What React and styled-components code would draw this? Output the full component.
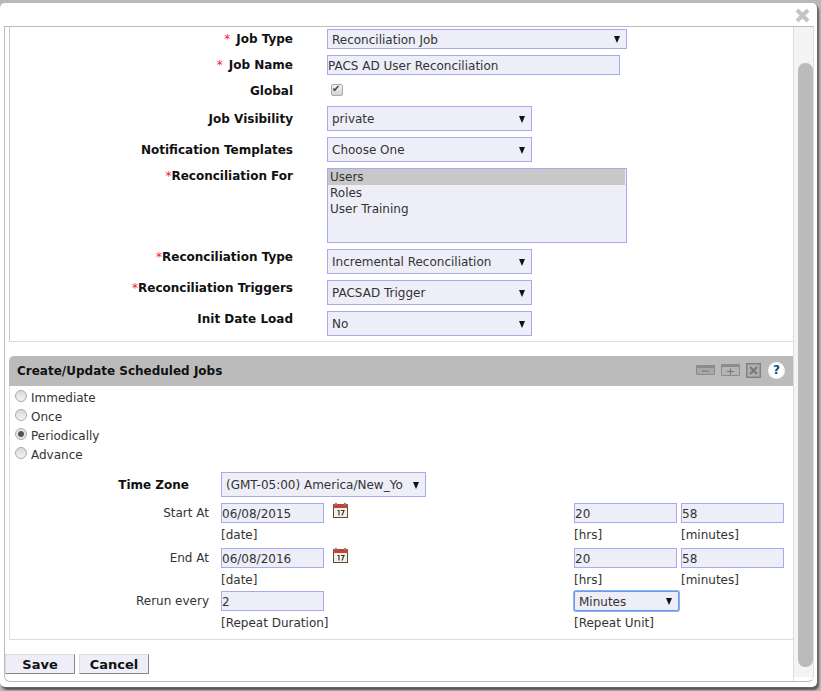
import React from "react";
import styled, { createGlobalStyle } from "styled-components";

const GlobalStyle = createGlobalStyle`
  html, body {
    margin: 0;
    padding: 0;
    height: 691px;
    overflow: hidden;
    background: #b9b9b9;
  }
  body, input, select, button {
    font-family: "DejaVu Sans", Verdana, sans-serif;
    font-size: 12px;
  }
`;

function Dropdown({ width, height, focused, children }) {
  return (
    <SelectWrap $width={width}>
      <SelectBox $height={height} $focused={focused} defaultValue={children}>
        <option>{children}</option>
      </SelectBox>
    </SelectWrap>
  );
}

function FormRow({ label, required, top, height, children }) {
  return (
    <Row $height={height}>
      <RowLabel $top={top}>
        {required && <Star $spaced={required === "spaced"}>*</Star>}
        {label}
      </RowLabel>
      {children}
    </Row>
  );
}

function Radio({ label, checked }) {
  return (
    <RadioRow>
      <RadioDot type="radio" name="schedule" defaultChecked={checked} />
      {label}
    </RadioRow>
  );
}

function CalendarIcon() {
  return (
    <CalendarWrap>
      <svg width="17" height="17" viewBox="0 0 17 17">
        <rect x="1.5" y="2.5" width="14" height="13" fill="#f4f0e4" stroke="#5a4a3a" />
        <rect x="1" y="2" width="15" height="4" fill="#c0443a" />
        <circle cx="4" cy="2" r="1.2" fill="#888" />
        <circle cx="13" cy="2" r="1.2" fill="#888" />
        <path d="M5.5 8.5h1.5v5M9 8.5h3l-2 5" fill="none" stroke="#333" strokeWidth="1.1" />
      </svg>
    </CalendarWrap>
  );
}

function PanelIcons() {
  return (
    <IconRow>
      <svg width="19" height="10" viewBox="0 0 19 10">
        <rect width="19" height="10" rx="1" fill="#8c8c8c" />
        <rect x="1" y="3" width="17" height="6" fill="#a8a8a8" />
        <path d="M6 6h7" stroke="#777" />
      </svg>
      <svg width="19" height="12" viewBox="0 0 19 12">
        <rect width="19" height="12" rx="1" fill="#8c8c8c" />
        <rect x="1" y="3" width="17" height="8" fill="#b4b4b4" />
        <path d="M6 7.5h7M9.5 4.5v6" stroke="#777" />
      </svg>
      <svg width="15" height="15" viewBox="0 0 15 15">
        <rect x="0.75" y="0.75" width="13.5" height="13.5" fill="#b0b0b0" stroke="#808080" strokeWidth="1.5" />
        <path d="M4 4l7 7M11 4l-7 7" stroke="#7a7a7a" strokeWidth="2.4" />
      </svg>
      <HelpDot>?</HelpDot>
    </IconRow>
  );
}

export default function App() {
  return (
    <>
      <GlobalStyle />
      <Dialog>
        <CloseBtn aria-label="Close">
          <svg width="15" height="15" viewBox="0 0 15 15">
            <path d="M2 2l11 11M13 2l-11 11" stroke="#c4c4c4" strokeWidth="4" />
          </svg>
        </CloseBtn>
        <ScrollFrame>
          <Content>
            <JobPanel>
              <FormRow label="Job Type" required="spaced" height={20}>
                <Dropdown width={300} height={20}>Reconciliation Job</Dropdown>
              </FormRow>
              <FormRow label="Job Name" required="spaced" height={20}>
                <TextInput $width={293} defaultValue="PACS AD User Reconciliation" />
              </FormRow>
              <FormRow label="Global" height={19}>
                <CheckBox type="checkbox" defaultChecked />
              </FormRow>
              <FormRow label="Job Visibility" height={25}>
                <Dropdown width={205} height={25}>private</Dropdown>
              </FormRow>
              <FormRow label="Notification Templates" height={25}>
                <Dropdown width={205} height={25}>Choose One</Dropdown>
              </FormRow>
              <FormRow label="Reconciliation For" required="tight" height={75} top>
                <ListBox>
                  <ListItem $selected>Users</ListItem>
                  <ListItem>Roles</ListItem>
                  <ListItem>User Training</ListItem>
                </ListBox>
              </FormRow>
              <FormRow label="Reconciliation Type" required="tight" height={25} top>
                <Dropdown width={205} height={25}>Incremental Reconciliation</Dropdown>
              </FormRow>
              <FormRow label="Reconciliation Triggers" required="tight" height={25} top>
                <Dropdown width={205} height={25}>PACSAD Trigger</Dropdown>
              </FormRow>
              <FormRow label="Init Date Load" height={25} top>
                <Dropdown width={205} height={25}>No</Dropdown>
              </FormRow>
            </JobPanel>

            <SchedulePanel>
              <PanelHeader>
                <PanelTitle>Create/Update Scheduled Jobs</PanelTitle>
                <PanelIcons />
              </PanelHeader>
              <PanelBody>
                <Radio label="Immediate" />
                <Radio label="Once" />
                <Radio label="Periodically" checked />
                <Radio label="Advance" />

                <TimeZoneRow>
                  <TimeZoneLabel>Time Zone</TimeZoneLabel>
                  <Dropdown width={205} height={25}>(GMT-05:00) America/New_York</Dropdown>
                </TimeZoneRow>

                <FieldGrid>
                  <FieldLabel>Start At</FieldLabel>
                  <Field>
                    <DateLine>
                      <TextInput $width={103} defaultValue="06/08/2015" />
                      <CalendarIcon />
                    </DateLine>
                    <Hint>[date]</Hint>
                  </Field>
                  <Field>
                    <TextInput $width={103} defaultValue="20" />
                    <Hint>[hrs]</Hint>
                  </Field>
                  <Field>
                    <TextInput $width={103} defaultValue="58" />
                    <Hint>[minutes]</Hint>
                  </Field>

                  <FieldLabel>End At</FieldLabel>
                  <Field>
                    <DateLine>
                      <TextInput $width={103} defaultValue="06/08/2016" />
                      <CalendarIcon />
                    </DateLine>
                    <Hint>[date]</Hint>
                  </Field>
                  <Field>
                    <TextInput $width={103} defaultValue="20" />
                    <Hint>[hrs]</Hint>
                  </Field>
                  <Field>
                    <TextInput $width={103} defaultValue="58" />
                    <Hint>[minutes]</Hint>
                  </Field>

                  <FieldLabel>Rerun every</FieldLabel>
                  <Field>
                    <TextInput $width={103} defaultValue="2" />
                    <Hint>[Repeat Duration]</Hint>
                  </Field>
                  <Field>
                    <Dropdown width={105} height={20} focused>Minutes</Dropdown>
                    <Hint>[Repeat Unit]</Hint>
                  </Field>
                </FieldGrid>
              </PanelBody>
            </SchedulePanel>

            <ButtonRow>
              <ActionButton>Save</ActionButton>
              <ActionButton>Cancel</ActionButton>
            </ButtonRow>
          </Content>
          <ScrollTrack>
            <ScrollThumb />
          </ScrollTrack>
        </ScrollFrame>
      </Dialog>
    </>
  );
}

const Dialog = styled.div`
  position: relative;
  box-sizing: border-box;
  width: 817px;
  height: 684px;
  margin-top: 3px;
  padding: 23px 3px 5px 4px;
  background: #fff;
  border-radius: 5px;
  box-shadow: 1px 1px 0 #666, 2px 3px 2px #555;
`;

const CloseBtn = styled.button`
  position: absolute;
  top: 5px;
  right: 7px;
  width: 15px;
  height: 15px;
  padding: 0;
  border: none;
  background: none;
`;

const ScrollFrame = styled.div`
  display: flex;
  height: 656px;
  box-sizing: border-box;
  border-top: 1px solid #bbb;
  border-left: 1px solid #bbb;
  border-bottom: 1px solid #bbb;
  border-right: 1px solid #ddd;
  border-radius: 0 0 6px 6px;
  overflow: hidden;
`;

const Content = styled.div`
  box-sizing: border-box;
  width: 789px;
  flex: none;
  border-right: 1px solid #ddd;
  overflow: hidden;
`;

const ScrollTrack = styled.div`
  flex: 1;
  box-sizing: border-box;
  height: 650px;
  padding: 36px 0 0 4px;
  background: #f4f4f4;
`;

const ScrollThumb = styled.div`
  width: 15px;
  height: 604px;
  border-radius: 7px;
  background: #bbb;
`;

const JobPanel = styled.div`
  box-sizing: border-box;
  display: flex;
  flex-direction: column;
  gap: 6px;
  height: 315px;
  margin-left: 4px;
  padding-top: 2px;
  border-left: 1px solid #ccc;
  border-bottom: 1px solid #ddd;
`;

const Row = styled.div`
  display: grid;
  grid-template-columns: 283px 1fr;
  column-gap: 34px;
  height: ${(p) => p.$height}px;
`;

const RowLabel = styled.div`
  font-weight: bold;
  color: #111;
  text-align: right;
  line-height: 14px;
  align-self: ${(p) => (p.$top ? "start" : "center")};
  margin-top: ${(p) => (p.$top ? "1px" : "0")};
`;

const Star = styled.span`
  color: #f02040;
  font-weight: normal;
  margin-right: ${(p) => (p.$spaced ? "6px" : "0")};
`;

const SelectWrap = styled.div`
  position: relative;
  width: ${(p) => p.$width}px;

  &::after {
    content: "";
    position: absolute;
    top: 50%;
    right: 7px;
    margin-top: -3px;
    border-top: 7px solid #111;
    border-left: 3.5px solid transparent;
    border-right: 3.5px solid transparent;
    pointer-events: none;
  }
`;

const SelectBox = styled.select`
  display: block;
  box-sizing: border-box;
  width: 100%;
  height: ${(p) => p.$height}px;
  padding: ${(p) => (p.$height < 25 ? "1px" : "0")} 22px 0 4px;
  appearance: none;
  background: #eeeef8;
  color: #333;
  border: 1px solid ${(p) => (p.$focused ? "#6a9ae8" : "#a9a9ee")};
  border-radius: ${(p) => (p.$focused ? "2px" : "0")};
  box-shadow: ${(p) => (p.$focused ? "0 0 0 1px #8ab4f0" : "none")};
`;

const TextInput = styled.input`
  display: block;
  box-sizing: border-box;
  width: ${(p) => p.$width}px;
  height: 20px;
  padding: 2px 1px 0 0;
  background: #eeeef8;
  color: #333;
  border: 1px solid #a9a9ee;
  outline: none;
`;

const CheckBox = styled.input`
  appearance: none;
  box-sizing: border-box;
  width: 12px;
  height: 12px;
  margin: 3px 0 0 4px;
  position: relative;
  background: linear-gradient(#f4f4f4, #d4d4d4);
  border: 1px solid #aaa;
  border-radius: 2px;

  &:checked::after {
    content: "✔";
    position: absolute;
    top: -2px;
    left: 0;
    font-size: 10px;
    line-height: 12px;
    color: #444;
  }
`;

const ListBox = styled.div`
  box-sizing: border-box;
  width: 300px;
  height: 75px;
  padding: 0 1px 0 0;
  background: #eeeef8;
  border: 1px solid #a9a9ee;
`;

const ListItem = styled.div`
  height: 16px;
  padding-left: 2px;
  line-height: 16px;
  color: #333;
  background: ${(p) => (p.$selected ? "#c8c8c8" : "transparent")};
`;

const SchedulePanel = styled.section`
  margin: 14px 0 0 4px;
`;

const PanelHeader = styled.div`
  display: flex;
  align-items: center;
  justify-content: space-between;
  height: 30px;
  padding: 0 8px 0 8px;
  background: #bbb;
  border-radius: 5px 0 0 0;
`;

const PanelTitle = styled.div`
  font-weight: bold;
  color: #111;
`;

const IconRow = styled.div`
  display: flex;
  align-items: center;
  gap: 6px;
  margin-top: -2px;
`;

const HelpDot = styled.div`
  width: 17px;
  height: 17px;
  margin-left: 1px;
  border-radius: 50%;
  background: radial-gradient(circle, #fff 55%, #dcdcdc);
  color: #0a4a9a;
  font-weight: bold;
  font-size: 12px;
  line-height: 17px;
  text-align: center;
`;

const PanelBody = styled.div`
  box-sizing: border-box;
  height: 254px;
  padding: 2px 0 5px;
  border-left: 1px solid #ddd;
  border-bottom: 1px solid #ddd;
`;

const RadioRow = styled.label`
  display: flex;
  align-items: center;
  gap: 4px;
  height: 19px;
  padding-left: 5px;
  color: #333;
`;

const RadioDot = styled.input`
  appearance: none;
  box-sizing: border-box;
  width: 12px;
  height: 12px;
  margin: -3px 0 0 0;
  border: 1px solid #aaa;
  border-radius: 50%;
  background: linear-gradient(#d8d8d8, #f4f4f4);

  &:checked {
    background: radial-gradient(circle, #555 0, #555 2.5px, #e4e4e4 3.5px);
  }
`;

const TimeZoneRow = styled.div`
  display: flex;
  align-items: center;
  height: 25px;
  margin-top: 8px;
`;

const TimeZoneLabel = styled.div`
  box-sizing: border-box;
  width: 211px;
  padding-right: 32px;
  font-weight: bold;
  color: #111;
  text-align: right;
`;

const FieldGrid = styled.div`
  display: grid;
  grid-template-columns: 211px 353px 107px 103px;
  grid-template-rows: 45px 43px auto;
  margin-top: 6px;
`;

const FieldLabel = styled.div`
  padding: 3px 12px 0 0;
  text-align: right;
  color: #333;
  line-height: 14px;
`;

const Field = styled.div`
  display: flex;
  flex-direction: column;
`;

const DateLine = styled.div`
  display: flex;
  align-items: flex-start;
`;

const CalendarWrap = styled.span`
  display: block;
  height: 17px;
  margin: -1px 0 0 8px;
`;

const Hint = styled.div`
  margin-top: 5px;
  line-height: 14px;
  color: #333;
`;

const ButtonRow = styled.div`
  display: flex;
  gap: 4px;
  margin-top: 14px;
`;

const ActionButton = styled.button`
  box-sizing: border-box;
  width: 70px;
  height: 20px;
  padding: 0;
  font-size: 13px;
  font-weight: bold;
  color: #111;
  background: #eeeef8;
  border: none;
  border-right: 1px solid #888;
  border-bottom: 1px solid #888;
  border-top: 1px solid #ddd;
  border-left: 1px solid #ddd;
`;
